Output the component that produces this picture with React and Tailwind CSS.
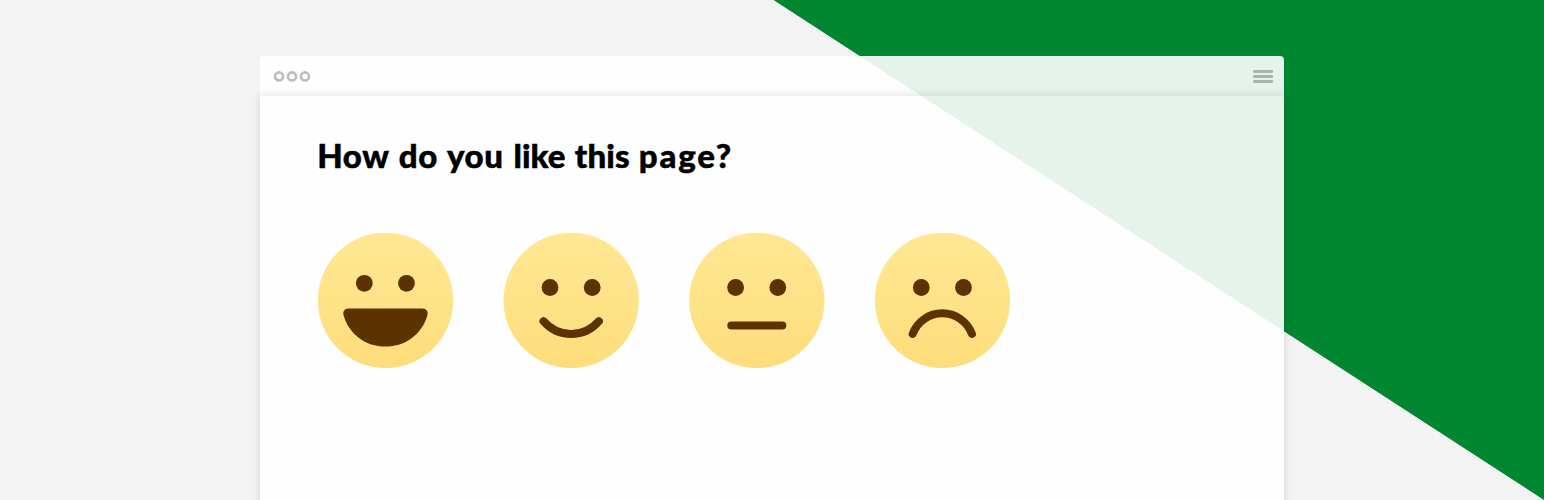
const INK = '#5c3300';

function Face({ label, eyeY, dx, children }) {
  return (
    <svg className="block size-[137px] shrink-0" viewBox="0 0 137 137" role="img" aria-label={label}>
      <defs>
        <linearGradient id={`skin-${label}`} x1="0" y1="0" x2="0" y2="1">
          <stop offset="0" stopColor="#ffe793" />
          <stop offset="0.5" stopColor="#fee388" />
          <stop offset="1" stopColor="#fddd7a" />
        </linearGradient>
      </defs>
      <g transform={`translate(${dx} 0.6)`}>
        <circle cx="67.8" cy="67.8" r="67.7" fill={`url(#skin-${label})`} />
        <circle cx="46.6" cy={eyeY} r="8.4" fill={INK} />
        <circle cx="88.8" cy={eyeY} r="8.4" fill={INK} />
        {children}
      </g>
    </svg>
  );
}

function Mouth({ d }) {
  return <path d={d} fill="none" stroke={INK} strokeWidth="8" strokeLinecap="round" />;
}

export default function App() {
  return (
    <div className="relative h-[500px] w-full overflow-hidden bg-[#f3f3f3]">
      <div className="absolute inset-0 bg-[#008631] [clip-path:polygon(773.5px_0,100%_0,100%_500px)]" />
      <main className="relative mx-auto flex h-full w-[1024px] flex-col pt-14">
        <header className="flex h-10 shrink-0 items-center justify-between rounded-t-[4px] bg-white/90 pr-[11px] pl-[13px]">
          <svg className="h-3 w-[38px]" viewBox="0 0 38 12" fill="none" stroke="#bdbdbd" strokeWidth="2.6">
            <circle cx="6" cy="6.4" r="4" />
            <circle cx="19" cy="6.4" r="4" />
            <circle cx="32" cy="6.4" r="4" />
          </svg>
          <div className="flex w-5 flex-col gap-[2px] pt-px">
            <span className="h-[3px] rounded-[1px] bg-[#a9b4ad]" />
            <span className="h-[3px] rounded-[1px] bg-[#a9b4ad]" />
            <span className="h-[3px] rounded-[1px] bg-[#a9b4ad]" />
          </div>
        </header>
        <section className="h-[424px] shrink-0 bg-white/90 pt-[39px] pl-[57.2px] shadow-[0_0_10px_rgba(0,0,0,0.13)]">
          <h1 className="font-['Lato',sans-serif] text-[33px] leading-10 font-black tracking-[0.65px] whitespace-nowrap text-black [-webkit-text-stroke:0.5px_black] [word-spacing:1.3px]">
            How do you <span className="tracking-[0.1px]">like this </span>
            <span className="tracking-[1.8px]">page?</span>
          </h1>
          <div className="mt-[57px] flex gap-[48.7px]">
            <Face label="delighted" eyeY="50.7" dx="0.7">
              <path
                d="M30.6 76H105C108.6 76 110.8 79 109.7 82.6C104.6 101.4 87.6 114 67.8 114S31 101.4 25.9 82.6C24.8 79 27 76 30.6 76Z"
                fill={INK}
              />
            </Face>
            <Face label="happy" eyeY="54.9" dx="0.4">
              <Mouth d="M40.1 88.6A36.4 36.4 0 0 0 95.5 88.6" />
            </Face>
            <Face label="neutral" eyeY="54.9" dx="0">
              <Mouth d="M42.3 92.9H93.3" />
            </Face>
            <Face label="sad" eyeY="54.9" dx="0.7">
              <Mouth d="M38 101.3A31.6 31.6 0 0 1 97.2 101.3" />
            </Face>
          </div>
        </section>
      </main>
    </div>
  );
}
